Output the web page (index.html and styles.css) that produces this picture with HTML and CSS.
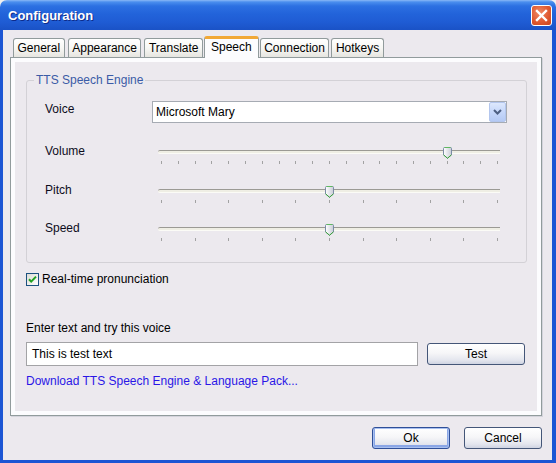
FILE: index.html
```html
<!DOCTYPE html>
<html>
<head>
<meta charset="utf-8">
<title>Configuration</title>
<link rel="stylesheet" href="styles.css">
</head>
<body>
<div class="window">
  <div class="titlebar">
    <span class="title">Configuration</span>
    <button class="close" aria-label="Close">
      <svg width="13" height="13" viewBox="0 0 13 13"><path d="M2 2 L11 11 M11 2 L2 11" stroke="#fff" stroke-width="2.4" stroke-linecap="square"/></svg>
    </button>
  </div>
  <div class="client">
    <div class="tabs">
      <div class="tab">General</div>
      <div class="tab">Appearance</div>
      <div class="tab">Translate</div>
      <div class="tab active">Speech</div>
      <div class="tab">Connection</div>
      <div class="tab">Hotkeys</div>
    </div>
    <div class="panel">
      <div class="panel-inner">
        <fieldset class="group">
          <legend>TTS Speech Engine</legend>
          <div class="row row-voice">
            <span class="label label-voice">Voice</span>
            <div class="combo">
              <span class="combo-text">Microsoft Mary</span>
              <span class="combo-btn">
                <svg width="9" height="6" viewBox="0 0 9 6"><path d="M1 1 L4.5 4.5 L8 1" fill="none" stroke="#4d5f82" stroke-width="2"/></svg>
              </span>
            </div>
          </div>
          <div class="row row-volume">
            <span class="label">Volume</span>
            <div class="slider">
              <div class="track"></div>
              <div class="ticks">
                <i></i><i></i><i></i><i></i><i></i><i></i><i></i><i></i><i></i><i></i><i></i><i></i><i></i><i></i><i></i><i></i><i></i><i></i><i></i><i></i><i></i>
              </div>
              <span class="thumb" style="--v:0.85">
                <svg width="9" height="12" viewBox="0 0 9 12"><defs><linearGradient id="tg1" x1="0" x2="1" y1="0" y2="0"><stop offset="0" stop-color="#ffffff"/><stop offset="1" stop-color="#c9ccd6"/></linearGradient></defs><path d="M1.5 0.5 H7.5 Q8.5 0.5 8.5 1.5 V7.8 L4.5 11.3 L0.5 7.8 V1.5 Q0.5 0.5 1.5 0.5 Z" fill="url(#tg1)" stroke="#7a8aa6"/><path d="M0.5 7.8 L4.5 11.3 L8.5 7.8" fill="none" stroke="#3aa53a"/><path d="M1.5 0.5 H7.5" stroke="#5fb85f"/></svg>
              </span>
            </div>
          </div>
          <div class="row row-pitch">
            <span class="label">Pitch</span>
            <div class="slider">
              <div class="track"></div>
              <div class="ticks">
                <i></i><i></i><i></i><i></i><i></i><i></i><i></i><i></i><i></i><i></i><i></i>
              </div>
              <span class="thumb" style="--v:0.5">
                <svg width="9" height="12" viewBox="0 0 9 12"><defs><linearGradient id="tg2" x1="0" x2="1" y1="0" y2="0"><stop offset="0" stop-color="#ffffff"/><stop offset="1" stop-color="#c9ccd6"/></linearGradient></defs><path d="M1.5 0.5 H7.5 Q8.5 0.5 8.5 1.5 V7.8 L4.5 11.3 L0.5 7.8 V1.5 Q0.5 0.5 1.5 0.5 Z" fill="url(#tg2)" stroke="#7a8aa6"/><path d="M0.5 7.8 L4.5 11.3 L8.5 7.8" fill="none" stroke="#3aa53a"/><path d="M1.5 0.5 H7.5" stroke="#5fb85f"/></svg>
              </span>
            </div>
          </div>
          <div class="row row-speed">
            <span class="label">Speed</span>
            <div class="slider">
              <div class="track"></div>
              <div class="ticks">
                <i></i><i></i><i></i><i></i><i></i><i></i><i></i><i></i><i></i><i></i><i></i>
              </div>
              <span class="thumb" style="--v:0.5">
                <svg width="9" height="12" viewBox="0 0 9 12"><defs><linearGradient id="tg3" x1="0" x2="1" y1="0" y2="0"><stop offset="0" stop-color="#ffffff"/><stop offset="1" stop-color="#c9ccd6"/></linearGradient></defs><path d="M1.5 0.5 H7.5 Q8.5 0.5 8.5 1.5 V7.8 L4.5 11.3 L0.5 7.8 V1.5 Q0.5 0.5 1.5 0.5 Z" fill="url(#tg3)" stroke="#7a8aa6"/><path d="M0.5 7.8 L4.5 11.3 L8.5 7.8" fill="none" stroke="#3aa53a"/><path d="M1.5 0.5 H7.5" stroke="#5fb85f"/></svg>
              </span>
            </div>
          </div>
        </fieldset>

        <div class="check">
          <span class="checkbox">
            <svg width="13" height="13" viewBox="0 0 13 13"><defs><linearGradient id="cb" x1="0" y1="0" x2="1" y2="1"><stop offset="0" stop-color="#dcdcd4"/><stop offset="1" stop-color="#ffffff"/></linearGradient></defs><rect x="0.5" y="0.5" width="12" height="12" fill="url(#cb)" stroke="#1c5180"/><path d="M3 6.2 L5.2 8.6 L10 3.6" fill="none" stroke="#21a121" stroke-width="2"/></svg>
          </span>
          <span>Real-time pronunciation</span>
        </div>

        <div class="try-label">Enter text and try this voice</div>
        <div class="try-row">
          <div class="textbox">This is test text</div>
          <button class="btn btn-test">Test</button>
        </div>
        <a class="link" href="#">Download TTS Speech Engine &amp; Language Pack...</a>
      </div>
    </div>
    <div class="actions">
      <button class="btn btn-default">Ok</button>
      <button class="btn">Cancel</button>
    </div>
  </div>
</div>
</body>
</html>
```
FILE: styles.css
```css
* { box-sizing: border-box; }

html, body {
  margin: 0;
  padding: 0;
}

body {
  width: 556px;
  height: 463px;
  overflow: hidden;
  background: #f0f0f0;
  font-family: "Liberation Sans", Arial, sans-serif;
  font-size: 12px;
  color: #000;
}

.window {
  width: 556px;
  height: 463px;
  display: flex;
  flex-direction: column;
}

.titlebar {
  height: 30px;
  flex: none;
  display: flex;
  align-items: center;
  justify-content: space-between;
  padding: 0 4px 0 8px;
  border-radius: 7px 7px 0 0;
  background: linear-gradient(180deg, #8ab8f6 0px, #4a8eee 2px, #2c70e2 6px, #2263da 14px, #1f5cd4 22px, #1a52c6 30px);
}

.title {
  color: #fff;
  font-family: "Liberation Sans", Arial, sans-serif;
  font-weight: bold;
  font-size: 13px;
  text-shadow: 1px 1px 0 #0d2b8a;
  margin-top: 1px;
}

.close {
  width: 21px;
  height: 21px;
  padding: 0;
  margin-top: 1px;
  border: 1px solid #fff;
  border-radius: 3px;
  background: radial-gradient(circle at 40% 35%, #f08a66 0%, #e05a32 55%, #c9431d 100%);
  display: flex;
  align-items: center;
  justify-content: center;
}

.client {
  flex: 1;
  background: #ece9ee;
  border-style: solid;
  border-color: #1c55d4;
  border-width: 0 4px 3px 3px;
  padding: 6px 10px 0 7px;
  display: flex;
  flex-direction: column;
}

/* Tabs */
.tabs {
  height: 21px;
  flex: none;
  display: flex;
  align-items: flex-end;
  padding-left: 3px;
  position: relative;
  z-index: 1;
}

.tab {
  height: 19px;
  padding: 0 3.5px;
  margin-right: 3px;
  border: 1px solid #919b9c;
  border-bottom: none;
  border-radius: 3px 3px 0 0;
  background: linear-gradient(180deg, #ffffff 0%, #f7f7f4 50%, #e6e5e0 100%);
  line-height: 18px;
  white-space: nowrap;
}

.tab:has(+ .active) { margin-right: 1px; }

.tab.active {
  height: 22px;
  margin-bottom: -1px;
  margin-right: 1px;
  padding: 0 6px;
  border-top: 3px solid #f1a836;
  background: #fcfcfe;
  line-height: 16px;
}

.tab.active + .tab { margin-right: 2px; }

/* Panel */
.panel {
  height: 359px;
  flex: none;
  border: 1px solid #919b9c;
  background: #fcfcfe;
  padding: 4px;
  box-shadow: 1px 1px 0 #d4d4dc;
}

.panel-inner {
  height: 100%;
  background: #ece9ee;
  padding: 0 11px;
  display: flex;
  flex-direction: column;
  align-items: flex-start;
}

.group {
  align-self: stretch;
  margin: 11px -1px 0 0;
  border: 1px solid #d3d1d6;
  border-radius: 3px;
  padding: 13px 19px 20px 18px;
  min-width: 0;
}

.group legend {
  padding: 0 2px;
  margin-left: -11px;
  line-height: 15px;
  color: #3b5ba6;
}

.row {
  display: grid;
  grid-template-columns: 107px 355px;
  align-items: start;
}

.row-voice { height: 43px; }
.row-volume { height: 39px; }
.row-pitch { height: 38px; }
.row-speed { height: 21px; }

.label {
  line-height: 15px;
  color: #0c0c1c;
}

.label-voice { padding-top: 1px; }

/* Combo */
.combo {
  height: 22px;
  border: 1px solid #a6abb3;
  background: #fff;
  display: flex;
  align-items: center;
  padding-left: 3px;
}

.combo-text { flex: 1; }

.combo-btn {
  width: 17px;
  height: 20px;
  border: 1px solid #b3c6ee;
  border-radius: 2px;
  background: linear-gradient(180deg, #dde8fd 0%, #c6d7fa 50%, #b5caf4 100%);
  display: flex;
  align-items: center;
  justify-content: center;
}

/* Slider */
.slider {
  position: relative;
  height: 21px;
}

.track {
  margin: 6px 7px 0 6px;
  height: 4px;
  border-top: 1px solid #9b9a94;
  border-bottom: 1px solid #fbfbf6;
  border-radius: 2px 0 0 2px;
  background: #efeee4;
}

.ticks {
  margin: 7px 9px 0 9px;
  height: 3px;
  display: flex;
  justify-content: space-between;
}

.ticks i {
  width: 1px;
  height: 3px;
  background: #a2a2a2;
}

.thumb {
  position: absolute;
  top: 3px;
  left: calc(5px + (100% - 19px) * var(--v));
  width: 9px;
  height: 12px;
  display: block;
}

.thumb svg { display: block; }

/* Checkbox */
.check {
  margin-top: 9px;
  height: 14px;
  display: flex;
  align-items: center;
  gap: 3px;
}

.checkbox svg { display: block; }

.try-label {
  margin-top: 35px;
  line-height: 15px;
}

.try-row {
  margin-top: 6px;
  display: flex;
  align-items: center;
  gap: 9px;
}

.textbox {
  width: 392px;
  height: 24px;
  border: 1px solid #a3a3a6;
  background: #fff;
  padding-left: 5px;
  line-height: 22px;
}

.btn {
  height: 22px;
  padding: 0;
  border: 1px solid #445678;
  border-radius: 3px;
  background: linear-gradient(180deg, #ffffff 0%, #f6f6f8 45%, #e4e6ee 80%, #cfd4e2 100%);
  font-family: "Liberation Sans", Arial, sans-serif;
  font-size: 12px;
  color: #000;
}

.btn-test { width: 98px; }

.link {
  margin-top: 8px;
  line-height: 15px;
  color: #2a16e6;
  text-decoration: none;
}

/* Bottom buttons */
.actions {
  margin-top: 11px;
  display: flex;
  justify-content: flex-end;
  gap: 14px;
}

.actions .btn { width: 78px; }

.btn-default {
  border-color: #2f4f98;
  box-shadow: inset 0 0 0 1px #a8c0f0, inset 0 -1px 0 2px #8aa6e6;
}
```
